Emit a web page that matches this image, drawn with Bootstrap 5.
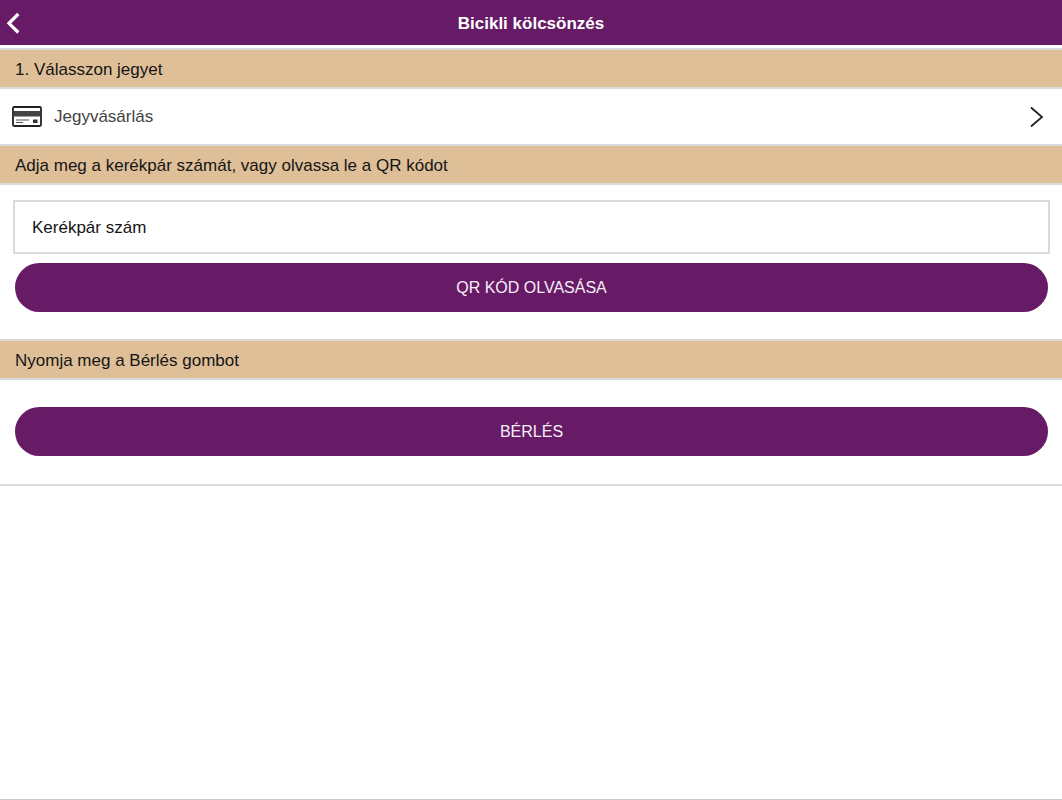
<!DOCTYPE html>
<html lang="hu">
<head>
<meta charset="utf-8">
<meta name="viewport" content="width=device-width, initial-scale=1">
<title>Bicikli kölcsönzés</title>
<link href="https://cdn.jsdelivr.net/npm/bootstrap@5.3.0/dist/css/bootstrap.min.css" rel="stylesheet">
<style>
  :root { --plum: #671b67; --sand: #dfbf98; --rule: #dadada; }
  body { font-family: "Liberation Sans", Arial, sans-serif; font-size: 17px; line-height: 24px; color: #151515; }
  .app-bar { background: var(--plum); height: 45px; margin-bottom: 3px; }
  .app-bar h1 { font-size: 17px; line-height: 24px; padding-top: 2px; }
  .back-link { width: 28px; }
  .section-title { background: var(--sand); border: solid var(--rule); border-width: 2px 0; font-size: 17px; line-height: 24px; padding: 8px 15px 5px; }
  .ticket-row { height: 55px; padding: 0 18px 0 12px; color: #444; }
  .ticket-row:hover { color: #222; }
  .bike-fields { padding: 15px 12px 28px 13px; }
  .rent-area { padding: 27px 12px 28px 13px; border-bottom: 2px solid var(--rule); }
  .bike-input, .bike-input:focus { height: 54px; border: 2px solid var(--rule); padding: 2px 17px 0; font-size: 17px; color: #151515; margin-bottom: 9px; }
  .bike-input::placeholder { color: #151515; opacity: 1; }
  .btn-plum { --bs-btn-color: #f6eef6; --bs-btn-bg: var(--plum); --bs-btn-hover-color: #fff; --bs-btn-hover-bg: #541454; --bs-btn-active-color: #fff; --bs-btn-active-bg: #451045; --bs-btn-font-size: 16px; --bs-btn-line-height: 24px; height: 49px; border: 0; }
  .button-inset { padding: 0 2px; }
  .bike-fields { padding-bottom: 27px; }
  .page-end { border-bottom: 1px solid #ccc; }
</style>
</head>
<body class="bg-white">
<div class="d-flex flex-column min-vh-100 page-end">
  <header class="app-bar d-flex align-items-center text-white">
    <a href="#" class="back-link d-flex text-white" aria-label="Vissza">
      <svg width="28" height="24" viewBox="0 0 28 24" fill="none" stroke="currentColor" stroke-width="3.2" aria-hidden="true"><path d="M18.3 3 9 12.3l9.3 9.2"/></svg>
    </a>
    <h1 class="flex-grow-1 text-center fw-bold mb-0">Bicikli kölcsönzés</h1>
    <span class="back-link"></span>
  </header>
  <main>
    <h2 class="section-title mb-0 fw-normal">1. Válasszon jegyet</h2>
    <a href="#" class="ticket-row d-flex align-items-center text-decoration-none">
      <svg width="30" height="21" viewBox="0 0 30 21" aria-hidden="true">
        <rect x="1" y="1" width="28" height="19" rx="1.2" fill="#fff" stroke="#222" stroke-width="1.8"/>
        <path d="M2 5h26v5.5H2z" fill="#444"/>
        <path d="M4 14h13M4 16.5h7" stroke="#555" stroke-width="1.1"/>
        <path d="M21 13.5h4.500v3.500H21z" fill="#333"/>
      </svg>
      <span class="flex-grow-1 ps-1 ms-2">Jegyvásárlás</span>
      <svg width="14" height="22" viewBox="0 0 14 22" fill="none" stroke="#222" stroke-width="1.8" aria-hidden="true"><path d="M1 1.500 12 11 1 20.500"/></svg>
    </a>
    <h2 class="section-title mb-0 fw-normal"><label for="bikeNumber">Adja meg a kerékpár számát, vagy olvassa le a QR kódot</label></h2>
    <form>
      <div class="bike-fields">
        <input id="bikeNumber" type="text" class="form-control rounded-0 shadow-none bike-input" placeholder="Kerékpár szám">
        <div class="button-inset"><button type="button" class="btn btn-plum rounded-pill w-100">QR KÓD OLVASÁSA</button></div>
      </div>
      <h2 class="section-title mb-0 fw-normal">Nyomja meg a Bérlés gombot</h2>
      <div class="rent-area">
        <div class="button-inset"><button type="submit" class="btn btn-plum rounded-pill w-100">BÉRLÉS</button></div>
      </div>
    </form>
  </main>
</div>
<script src="https://cdn.jsdelivr.net/npm/bootstrap@5.3.0/dist/js/bootstrap.bundle.min.js"></script>
</body>
</html>
